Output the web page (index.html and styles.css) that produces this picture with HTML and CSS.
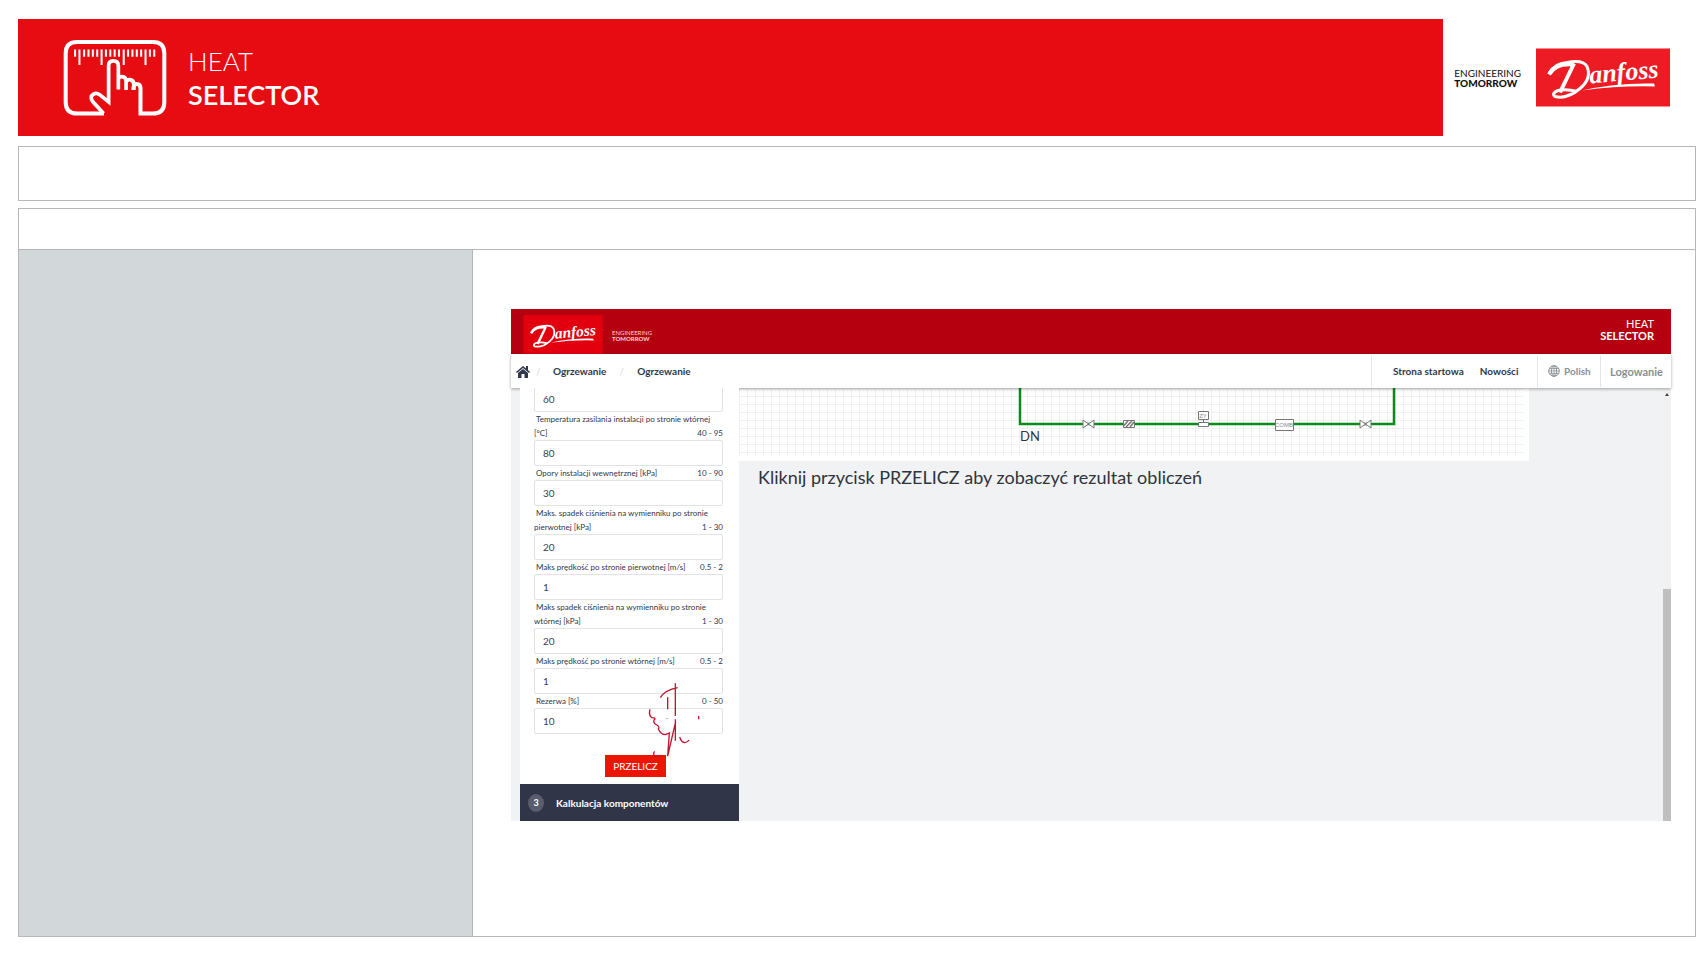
FILE: index.html
```html
<!DOCTYPE html>
<html lang="pl">
<head>
<meta charset="utf-8">
<title>Heat Selector</title>
<link rel="stylesheet" href="styles.css">
</head>
<body>
<header class="banner">
  <div class="banner-main">
    <svg class="hand-icon" viewBox="190 120 310 232" aria-hidden="true">
      <path d="M312 342H232Q198 342 198 308V163Q198 129 232 129H458Q492 129 492 163V308Q492 342 458 342H421V266Q421 254 409 254Q401 254 400 266V272" fill="none" stroke="#fff" stroke-width="12"/>
      <path d="M311 342L279 307Q268 292 281 284Q290 278 301 287L326 307V200Q326 185 340 185Q355 185 355 200V270M355 240Q357 231 366 232Q378 233 378 246V272M378 248Q382 240 390 241Q401 243 401 255V272" fill="none" stroke="#fff" stroke-width="11"/>
      <path d="M226 151V173M253 151V173M266 151V173M279 151V173M292 151V173M318 151V173M331 151V173M344 151V173M357 151V173M384 151V173M397 151V173M410 151V173M423 151V173M449 151V173M462 151V173M239 151V197M305 151V197M371 151V197M436 151V197" stroke="#fff" stroke-width="6"/>
    </svg>
    <h1 class="product"><span class="product-light">HEAT</span><span class="product-bold">SELECTOR</span></h1>
  </div>
  <div class="brand">
    <p class="tagline"><span>ENGINEERING</span><b>TOMORROW</b></p>
    <svg class="logo" viewBox="0 0 134 58" role="img" aria-label="Danfoss">
      <rect width="134" height="58" fill="#ed1c24"/>
      <path d="M13 25Q18 15 31 14Q47 11 51 18Q56 30 44 40Q31 51 19 48Q15 45 22 42Q31 40 41 43" fill="none" stroke="#fff" stroke-width="3"/>
      <path d="M13 26Q20 14 38 16" fill="none" stroke="#fff" stroke-width="4"/>
      <path d="M38 15L24 44" stroke="#fff" stroke-width="4"/>
      <path d="M46 42Q80 34 118 35L119 38Q84 37 46 42Z" fill="#fff"/>
      <text class="logo-text" x="54" y="35" transform="rotate(-5 54 35)">anfoss</text>
    </svg>
  </div>
</header>
<div class="strip"></div>
<section class="frame">
  <div class="frame-head"></div>
  <div class="frame-body">
    <aside class="side"></aside>
    <main class="content">
      <div class="app">
        <header class="app-top">
          <svg class="app-logo" viewBox="0 0 134 66" role="img" aria-label="Danfoss">
            <rect width="134" height="66" fill="#e2000f"/>
            <path d="M13 30Q18 20 31 19Q47 16 51 23Q56 35 44 45Q31 56 19 53Q15 50 22 47Q31 45 41 48" fill="none" stroke="#fff" stroke-width="3"/>
            <path d="M13 31Q20 19 38 21" fill="none" stroke="#fff" stroke-width="4"/>
            <path d="M38 20L24 49" stroke="#fff" stroke-width="4"/>
            <path d="M46 47Q80 39 118 40L119 43Q84 42 46 47Z" fill="#fff"/>
            <text class="logo-text" x="54" y="40" transform="rotate(-5 54 40)">anfoss</text>
          </svg>
          <p class="app-tagline"><span>ENGINEERING</span><b>TOMORROW</b></p>
          <p class="app-product"><span>HEAT</span><b>SELECTOR</b></p>
        </header>
        <nav class="app-nav">
          <a class="home" href="#" aria-label="Home">
            <svg viewBox="0 0 14 13" width="14" height="13"><path d="M7 1L0 7L1 8L7 3L13 8L14 7L12 5V1H10V3.500Z M2 8L7 4L12 8V13H8.500V9H5.500V13H2Z" fill="#30374a"/></svg>
          </a>
          <span class="slash">/</span>
          <a class="crumb" href="#">Ogrzewanie</a>
          <span class="slash">/</span>
          <a class="crumb" href="#">Ogrzewanie</a>
          <div class="nav-links"><a href="#">Strona startowa</a><a href="#">Nowości</a></div>
          <a class="nav-lang" href="#">
            <svg viewBox="0 0 12 12" width="12" height="12" fill="none" stroke="#8a8f96"><circle cx="6" cy="6" r="5.300"/><ellipse cx="6" cy="6" rx="2.500" ry="5.300"/><path d="M6 1V11M1 6H11M1.500 3.500H10.500M1.500 8.500H10.500" stroke-width=".8"/></svg>
            Polish</a>
          <a class="nav-login" href="#">Logowanie</a>
        </nav>
        <div class="app-body">
          <form class="panel">
            <div class="fields">
              <input class="field" type="text" value="60" aria-label="Temperatura">
              <label class="caption" for="f1">Temperatura zasilania instalacji po stronie wtórnej<br>[°C]<span class="range">40 - 95</span></label>
              <input class="field" id="f1" type="text" value="80">
              <label class="caption" for="f2">Opory instalacji wewnętrznej [kPa]<span class="range">10 - 90</span></label>
              <input class="field" id="f2" type="text" value="30">
              <label class="caption" for="f3">Maks. spadek ciśnienia na wymienniku po stronie<br>pierwotnej [kPa]<span class="range">1 - 30</span></label>
              <input class="field" id="f3" type="text" value="20">
              <label class="caption" for="f4">Maks prędkość po stronie pierwotnej [m/s]<span class="range">0.5 - 2</span></label>
              <input class="field" id="f4" type="text" value="1">
              <label class="caption" for="f5">Maks spadek ciśnienia na wymienniku po stronie<br>wtórnej [kPa]<span class="range">1 - 30</span></label>
              <input class="field" id="f5" type="text" value="20">
              <label class="caption" for="f6">Maks prędkość po stronie wtórnej [m/s]<span class="range">0.5 - 2</span></label>
              <input class="field" id="f6" type="text" value="1">
              <label class="caption" for="f7">Rezerwa [%]<span class="range">0 - 50</span></label>
              <input class="field" id="f7" type="text" value="10">
            </div>
            <button class="submit" type="button">PRZELICZ</button>
            <div class="step"><span class="step-no">3</span><span>Kalkulacja komponentów</span></div>
            <svg class="pointer" viewBox="405 270 174 240" aria-hidden="true">
              <path d="M496 280V378M496 388V452M451 323Q465 300 503 293M473 322V358M420 358Q415 378 426 383Q440 384 432 390Q429 400 441 405Q450 411 445 417Q453 434 466 434L478 429L473 498L497 395M509 441Q514 458 525 458Q532 458 537 450M566 378V388M434 484Q426 494 437 498L447 499" fill="none" stroke="#c4122f" stroke-width="4"/>
              <path d="M468 386H475" stroke="#999" stroke-width="2"/>
            </svg>
          </form>
          <section class="result">
            <svg class="diagram" viewBox="0 0 790 73" role="img" aria-label="Schemat">
              <defs><pattern id="grid" width="8" height="8" patternUnits="userSpaceOnUse"><path d="M.5 0V8M0 .5H8" stroke="#f0f0f1"/></pattern></defs>
              <rect width="790" height="73" fill="#fff"/>
              <rect width="784" height="68" fill="url(#grid)"/>
              <path d="M281 0V36H655V0" fill="none" stroke="#0c8a1c" stroke-width="2.500"/>
              <g fill="#fff" stroke="#777">
                <path d="M344 32V40L355 32V40ZM621 32V40L632 32V40Z"/>
                <path d="M384.500 32.500H395.500V39.500H384.500ZM459.500 34.500H469.500V38.500H459.500ZM459.500 23.500H469.500V31.500H459.500ZM536.500 31.500H554.500V42.500H536.500ZM464.500 32V34"/>
                <path d="M384.500 38L389 33M387 39L393 33M391 39L395 34" stroke-width="1.500"/>
              </g>
              <text class="tag" x="464" y="30">ZY</text>
              <text class="tag" x="545" y="39">COMB</text>
              <text class="dn" x="281" y="53">DN</text>
            </svg>
            <h2 class="hint">Kliknij przycisk PRZELICZ aby zobaczyć rezultat obliczeń</h2>
          </section>
          <div class="scroll"><span class="scroll-up"></span><span class="scroll-thumb"></span></div>
        </div>
      </div>
    </main>
  </div>
</section>
</body>
</html>
```
FILE: styles.css
```css
* { box-sizing: border-box; }
body {
  margin: 0;
  min-height: 100vh;
  padding: 19px 10px 23px 18px;
  display: flex;
  flex-direction: column;
  background: #fff;
  color: #30374a;
  font-family: Lato, "Noto Sans", sans-serif;
}
p, h1, h2 { margin: 0; }
a { color: inherit; text-decoration: none; }

.banner { display: flex; height: 117px; }
.banner-main {
  flex: 1;
  display: flex;
  align-items: center;
  gap: 21px;
  padding-left: 45px;
  background: #e60c12;
  color: #fff;
}
.hand-icon { width: 104px; height: 78px; }
.product { display: flex; flex-direction: column; font-size: 28px; line-height: 34px; }
.product-light { font-weight: 300; font-size: 26px; }
.product-bold { font-weight: 600; font-size: 27px; }
.brand { width: 253px; display: flex; align-items: center; justify-content: flex-end; gap: 15px; padding-right: 26px; }
.tagline { display: flex; flex-direction: column; font-size: 10px; line-height: 10px; color: #111; }
.tagline b { font-weight: 900; }
.logo { width: 134px; height: 59px; }
.logo-text { font: italic bold 26px "Liberation Serif", serif; fill: #fff; }

.strip { height: 55px; margin-top: 10px; border: 1px solid #b4b8ba; }
.frame { flex: 1; display: flex; flex-direction: column; margin-top: 7px; border: 1px solid #b4b8ba; }
.frame-head { height: 41px; border-bottom: 1px solid #b4b8ba; }
.frame-body { flex: 1; display: flex; }
.side { width: 454px; background: #d2d7da; border-right: 1px solid #b4b8ba; }
.content { flex: 1; min-width: 0; padding: 59px 24px 60px 38px; }

.app { display: flex; flex-direction: column; background: #f1f2f4; }
.app-top { display: flex; align-items: center; height: 45px; padding: 0 17px 0 12px; background: #b5000f; color: #fff; }
.app-logo { width: 80px; height: 39px; align-self: flex-end; }
.app-tagline { display: flex; flex-direction: column; margin-left: 9px; padding-top: 8px; font-size: 6px; line-height: 6px; color: #f6d5d8; }
.app-product { display: flex; flex-direction: column; align-items: flex-end; margin-left: auto; padding-bottom: 4px; font-size: 11px; line-height: 12px; }
.app-nav {
  position: relative;
  display: flex;
  align-items: center;
  height: 34px;
  padding-left: 5px;
  background: #fff;
  font-size: 10px;
  font-weight: 700;
  box-shadow: 0 1px 3px rgba(0, 0, 0, .35);
}
.home { display: flex; }
.slash { width: 23px; padding-left: 6px; color: #d8dade; font-weight: 400; }
.crumb + .slash { width: 31px; padding-left: 13px; }
.nav-links, .nav-lang, .nav-login { display: flex; align-items: center; height: 31px; border-left: 1px solid #e4e5e7; }
.nav-links { width: 166px; margin-left: auto; padding-left: 21px; gap: 16px; }
.nav-lang { width: 63px; padding-left: 10px; gap: 4px; color: #8a8f96; }
.nav-login { width: 71px; padding-left: 9px; font-size: 11px; color: #8a8f96; }

.app-body { display: flex; height: 433px; padding-left: 9px; overflow: hidden; }
.panel { position: relative; width: 219px; display: flex; flex-direction: column; justify-content: flex-end; align-items: center; background: #fff; }
.panel > * { flex-shrink: 0; }
.fields { display: flex; flex-direction: column; align-self: stretch; padding: 0 16px 0 14px; }
.field {
  width: 100%;
  height: 26px;
  padding: 0 8px;
  border: 1px solid #e2e3e6;
  border-radius: 2px;
  background: #fff;
  color: #3c4250;
  font: 10px Lato, sans-serif;
}
.caption { font-size: 8px; line-height: 14px; text-indent: 2px; white-space: nowrap; color: #30374a; }
.range { float: right; }
.submit { width: 61px; height: 22px; margin: 21px 0 7px 12px; padding: 0; border: 0; background: #ec1600; color: #fff; font: 10px Lato, sans-serif; }
.step { align-self: stretch; display: flex; align-items: center; gap: 12px; height: 37px; padding-left: 8px; background: #303548; color: #fff; font-size: 10px; font-weight: 700; }
.step-no { width: 16px; height: 18px; border-radius: 50%; background: #595d6e; line-height: 18px; text-align: center; font-size: 9px; }
.pointer { position: absolute; left: 125px; bottom: 61px; width: 58px; height: 80px; }

.result { flex: 1; min-width: 0; }
.diagram { display: block; width: 790px; max-width: 100%; }
.tag { font: 6px "Liberation Sans", sans-serif; fill: #888; text-anchor: middle; }
.dn { font: 13px Lato, sans-serif; fill: #30343c; }
.hint { padding: 3px 0 0 19px; font-size: 18px; line-height: 26px; font-weight: 400; color: #30343c; }
.scroll { width: 8px; display: flex; flex-direction: column; justify-content: space-between; align-items: center; padding-top: 5px; background: #f1f1f1; }
.scroll-up { border: 2px solid transparent; border-top: 0; border-bottom: 3px solid #444; }
.scroll-thumb { width: 8px; height: 232px; background: #bfbfbf; }
```
